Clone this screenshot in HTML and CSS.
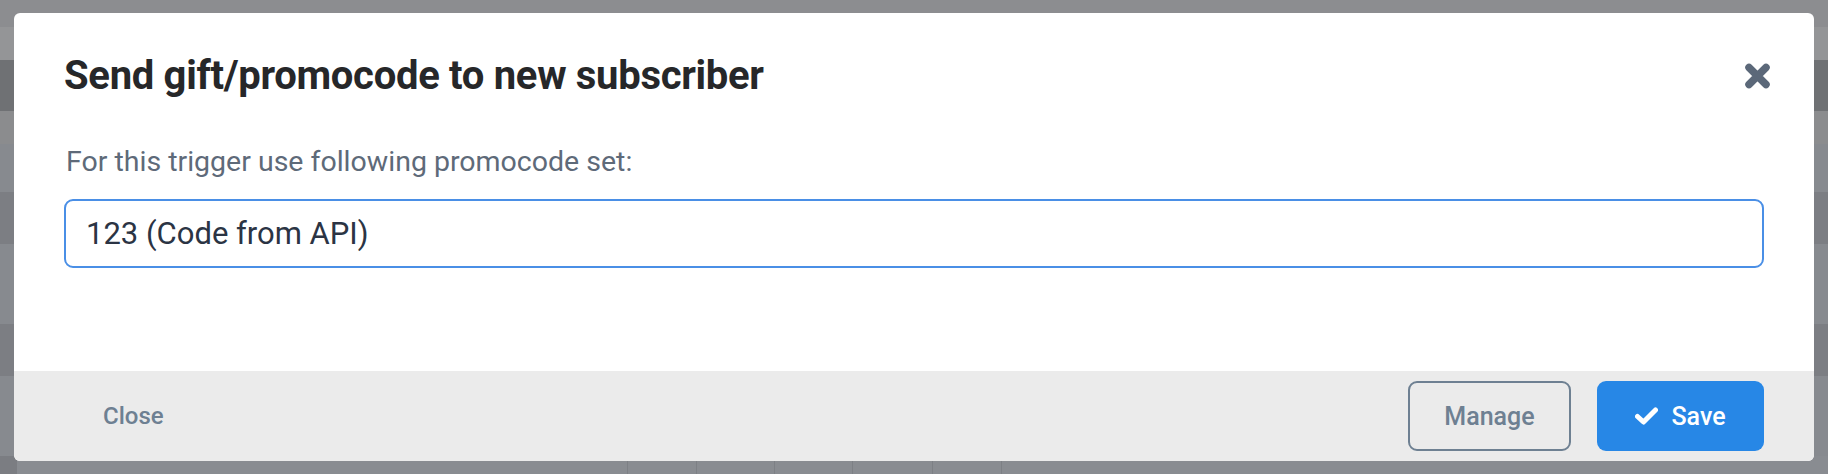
FILE: index.html
```html
<!DOCTYPE html>
<html lang="en">
<head>
    <meta charset="UTF-8">
    <title>Send gift/promocode</title>
    <link rel="stylesheet" href="styles.css">
</head>
<body>
    <!-- page behind the overlay -->
    <div class="page">
        <div class="row r1"></div>
        <div class="row r2"></div>
        <div class="row r3"></div>
        <div class="row r4"></div>
        <div class="row r5"></div>
        <div class="row r6"></div>
        <div class="row r5 tall"></div>
        <div class="row r6"></div>
        <div class="row r5 tall"></div>
        <div class="row table-foot">
            <div class="cols">
                <span class="col c1"></span>
                <span class="col c2"></span>
                <span class="col c2"></span>
                <span class="col c3"></span>
                <span class="col c1"></span>
                <span class="col"></span>
            </div>
        </div>
    </div>

    <div class="modal">
        <div class="modal-header">
            <h2 class="modal-title">Send gift/promocode to new subscriber</h2>
            <button class="close-x" aria-label="Close">
                <svg width="27" height="26" viewBox="0 0 27 26">
                    <path d="M5 4.5 L22 21.5 M22 4.5 L5 21.5" stroke="#5b6879" stroke-width="7.5" stroke-linecap="round" fill="none"/>
                </svg>
            </button>
        </div>

        <div class="modal-body">
            <p class="field-label">For this trigger use following promocode set:</p>
            <div class="select-box">123 (Code from API)</div>
        </div>

        <div class="modal-footer">
            <a class="link-close">Close</a>
            <div class="actions">
                <button class="btn btn-outline">Manage</button>
                <button class="btn btn-primary">
                    <svg width="23" height="18" viewBox="0 0 23 18">
                        <path d="M2.5 9.5 L8.5 15 L20.5 3" stroke="#fff" stroke-width="5" stroke-linecap="round" stroke-linejoin="round" fill="none"/>
                    </svg>
                    Save
                </button>
            </div>
        </div>
    </div>
</body>
</html>
```

FILE: styles.css
```css
body {
    margin: 0;
    background-color: #8a8d91;
    font-family: Roboto, "Noto Sans", sans-serif;
    overflow: hidden;
}

.page {
    display: flex;
    flex-direction: column;
    height: 474px;
    overflow: hidden;
}

.row { flex: none; }
.r1 { height: 27px; background-color: #8c8d90; }
.r2 { height: 33px; background-color: #949597; }
.r3 { height: 51px; background-color: #6f7174; }
.r4 { height: 33px; background-color: #8b8c8e; }
.r5 { height: 48px; background-color: #878a8f; }
.r6 { height: 52px; background-color: #7c7e83; }
.tall { height: 80px; }

.table-foot {
    height: 18px;
    background-color: #898c91;
    border-left: 17px solid #7b7d82;
    box-sizing: border-box;
}

.cols {
    display: flex;
    margin-left: 610px;
    padding-top: 5px;
}

.col {
    width: 70px;
    height: 13px;
    border-left: 1px solid #7d8085;
}
.c1 { width: 68px; }
.c2 { width: 77px; }
.c3 { width: 79px; }

.modal {
    position: absolute;
    top: 13px;
    left: 14px;
    width: 1800px;
    height: 448px;
    background-color: #fff;
    border-radius: 6px;
    display: flex;
    flex-direction: column;
    overflow: hidden;
}

.modal-header {
    display: flex;
    justify-content: space-between;
    align-items: center;
    padding: 39px 43px 0 50px;
}

.modal-title {
    margin: 0;
    font-size: 40px;
    line-height: 48px;
    font-weight: 700;
    color: #262729;
    letter-spacing: -0.3px;
}

.close-x {
    border: none;
    background: none;
    padding: 0;
    display: flex;
}

.modal-body {
    flex: 1;
    padding: 0 50px;
}

.field-label {
    margin: 45px 0 20px 2px;
    font-size: 28.5px;
    line-height: 34px;
    color: #5e6a79;
}

.select-box {
    height: 69px;
    box-sizing: border-box;
    border: 2px solid #4a8fe6;
    border-radius: 9px;
    padding: 0 20px;
    display: flex;
    align-items: center;
    font-size: 31px;
    color: #2b3444;
}

.modal-footer {
    height: 90px;
    flex: none;
    background-color: #ebebeb;
    display: flex;
    justify-content: space-between;
    align-items: center;
    padding: 0 50px;
}

.link-close {
    padding-left: 39px;
    font-size: 24px;
    font-weight: 500;
    color: #6e8092;
}

.actions {
    display: flex;
    gap: 26px;
}

.btn {
    height: 70px;
    border-radius: 9px;
    font-family: Roboto, sans-serif;
    font-size: 25px;
    font-weight: 500;
    display: flex;
    align-items: center;
    justify-content: center;
    gap: 13px;
    box-sizing: border-box;
}

.btn-outline {
    width: 163px;
    background: transparent;
    border: 2px solid #6e8092;
    color: #6e8092;
}

.btn-primary {
    width: 167px;
    border: none;
    background-color: #2787e6;
    color: #fff;
}
```
